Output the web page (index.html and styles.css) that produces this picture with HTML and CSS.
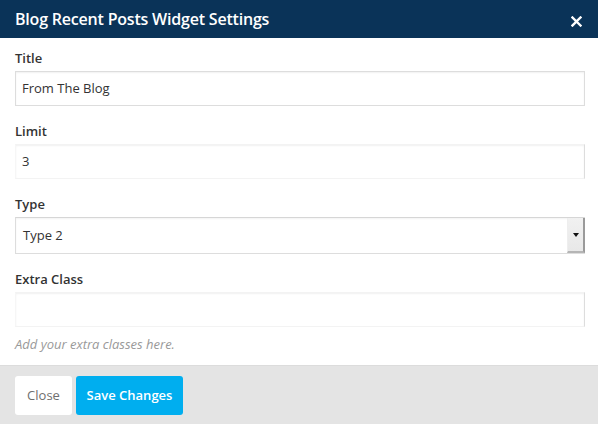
FILE: index.html
```html
<!DOCTYPE html>
<html>
<head>
<meta charset="utf-8">
<link rel="stylesheet" href="styles.css">
</head>
<body>
<div class="modal">
  <header class="modal-header">
    <h1 class="modal-title">Blog Recent Posts Widget Settings</h1>
    <button class="modal-close" aria-label="Close">
      <svg width="11" height="11" viewBox="0 0 11 11"><path d="M1.5 1.5 L9.5 9.5 M9.5 1.5 L1.5 9.5" stroke="#fff" stroke-width="2.4" stroke-linecap="square"/></svg>
    </button>
  </header>
  <div class="modal-body">
    <div class="field">
      <label class="field-label">Title</label>
      <div class="input input-strong">From The Blog</div>
    </div>
    <div class="field">
      <label class="field-label">Limit</label>
      <div class="input input-soft">3</div>
    </div>
    <div class="field">
      <label class="field-label">Type</label>
      <div class="select">
        <div class="select-value">Type 2</div>
        <div class="select-btn"><span class="select-arrow"></span></div>
      </div>
    </div>
    <div class="field field-last">
      <label class="field-label">Extra Class</label>
      <div class="input input-soft"></div>
      <p class="help">Add your extra classes here.</p>
    </div>
  </div>
  <footer class="modal-footer">
    <button class="btn btn-default">Close</button>
    <button class="btn btn-primary">Save Changes</button>
  </footer>
</div>
</body>
</html>
```
FILE: styles.css
```css
html, body {
  margin: 0;
  padding: 0;
  background: #e4e4e4;
}
body {
  font-family: "Open Sans", "Liberation Sans", sans-serif;
  color: #333;
  width: 598px;
  height: 424px;
  overflow: hidden;
}
.modal {
  display: flex;
  flex-direction: column;
  height: 424px;
}
.modal-header {
  height: 38px;
  flex: none;
  background: #0a3358;
  display: flex;
  align-items: center;
  justify-content: space-between;
  padding: 0 15px 0 15px;
  box-sizing: border-box;
}
.modal-title {
  margin: 0;
  font-size: 16px;
  font-weight: 600;
  color: #fff;
  line-height: 22px;
  letter-spacing: -0.2px;
  padding-bottom: 1px;
}
.modal-close {
  background: none;
  border: 0;
  padding: 0;
  width: 11px;
  height: 11px;
  display: flex;
  margin-top: 4px;
  margin-right: 1px;
}
.modal-body {
  background: #fff;
  padding: 10px 13px 12px 15px;
}
.field {
  margin-bottom: 15px;
}
.field-last {
  margin-bottom: 0;
}
.field-label {
  display: block;
  font-size: 13px;
  font-weight: 600;
  line-height: 20px;
  margin-bottom: 3px;
  color: #333;
}
.input {
  height: 35px;
  box-sizing: border-box;
  padding: 0 6px;
  font-size: 13px;
  line-height: 33px;
  color: #333;
  background: #fff;
  border: 1px solid #ddd;
  box-shadow: inset 0 1px 2px rgba(0, 0, 0, 0.06);
}
.input-soft {
  border-color: #f3f3f3 #ddd #f3f3f3 #f6f6f6;
}
.select {
  display: flex;
  height: 37px;
  box-sizing: border-box;
  border: 1px solid #ddd;
  border-top-color: #d6d6d6;
  background: #fff;
  box-shadow: inset 0 1px 2px rgba(0, 0, 0, 0.05);
}
.select-value {
  flex: 1;
  font-size: 13px;
  line-height: 35px;
  padding: 0 7px;
  color: #333;
}
.select-btn {
  width: 15px;
  background: linear-gradient(#f1f1f1, #e8e8e8);
  border-left: 1px solid #eee;
  border-right: 2px solid #9a9a9a;
  border-bottom: 2px solid #b5b5b5;
  display: flex;
  align-items: center;
  justify-content: center;
  margin-right: -1px;
}
.select-arrow {
  width: 0;
  height: 0;
  border-left: 3.5px solid transparent;
  border-right: 3.5px solid transparent;
  border-top: 4px solid #111;
  margin-left: 1px;
}
.help {
  margin: 9px 0 0;
  font-size: 13px;
  font-style: italic;
  color: #999;
  line-height: 17px;
}
.modal-footer {
  flex: 1;
  background: #e4e4e4;
  border-top: 1px solid #dcdcdc;
  padding: 10px 15px;
  display: flex;
  align-items: flex-start;
  gap: 4px;
}
.btn {
  font-family: "Open Sans", "Liberation Sans", sans-serif;
  font-size: 13px;
  height: 39px;
  border: 0;
  border-radius: 3px;
  padding: 0 12px;
  line-height: 39px;
}
.btn-default {
  background: #fff;
  color: #6f6f6f;
  width: 57px;
  padding: 0;
}
.btn-primary {
  background: #00aeef;
  color: #fff;
  font-weight: 600;
  width: 107px;
  padding: 0;
}
```
